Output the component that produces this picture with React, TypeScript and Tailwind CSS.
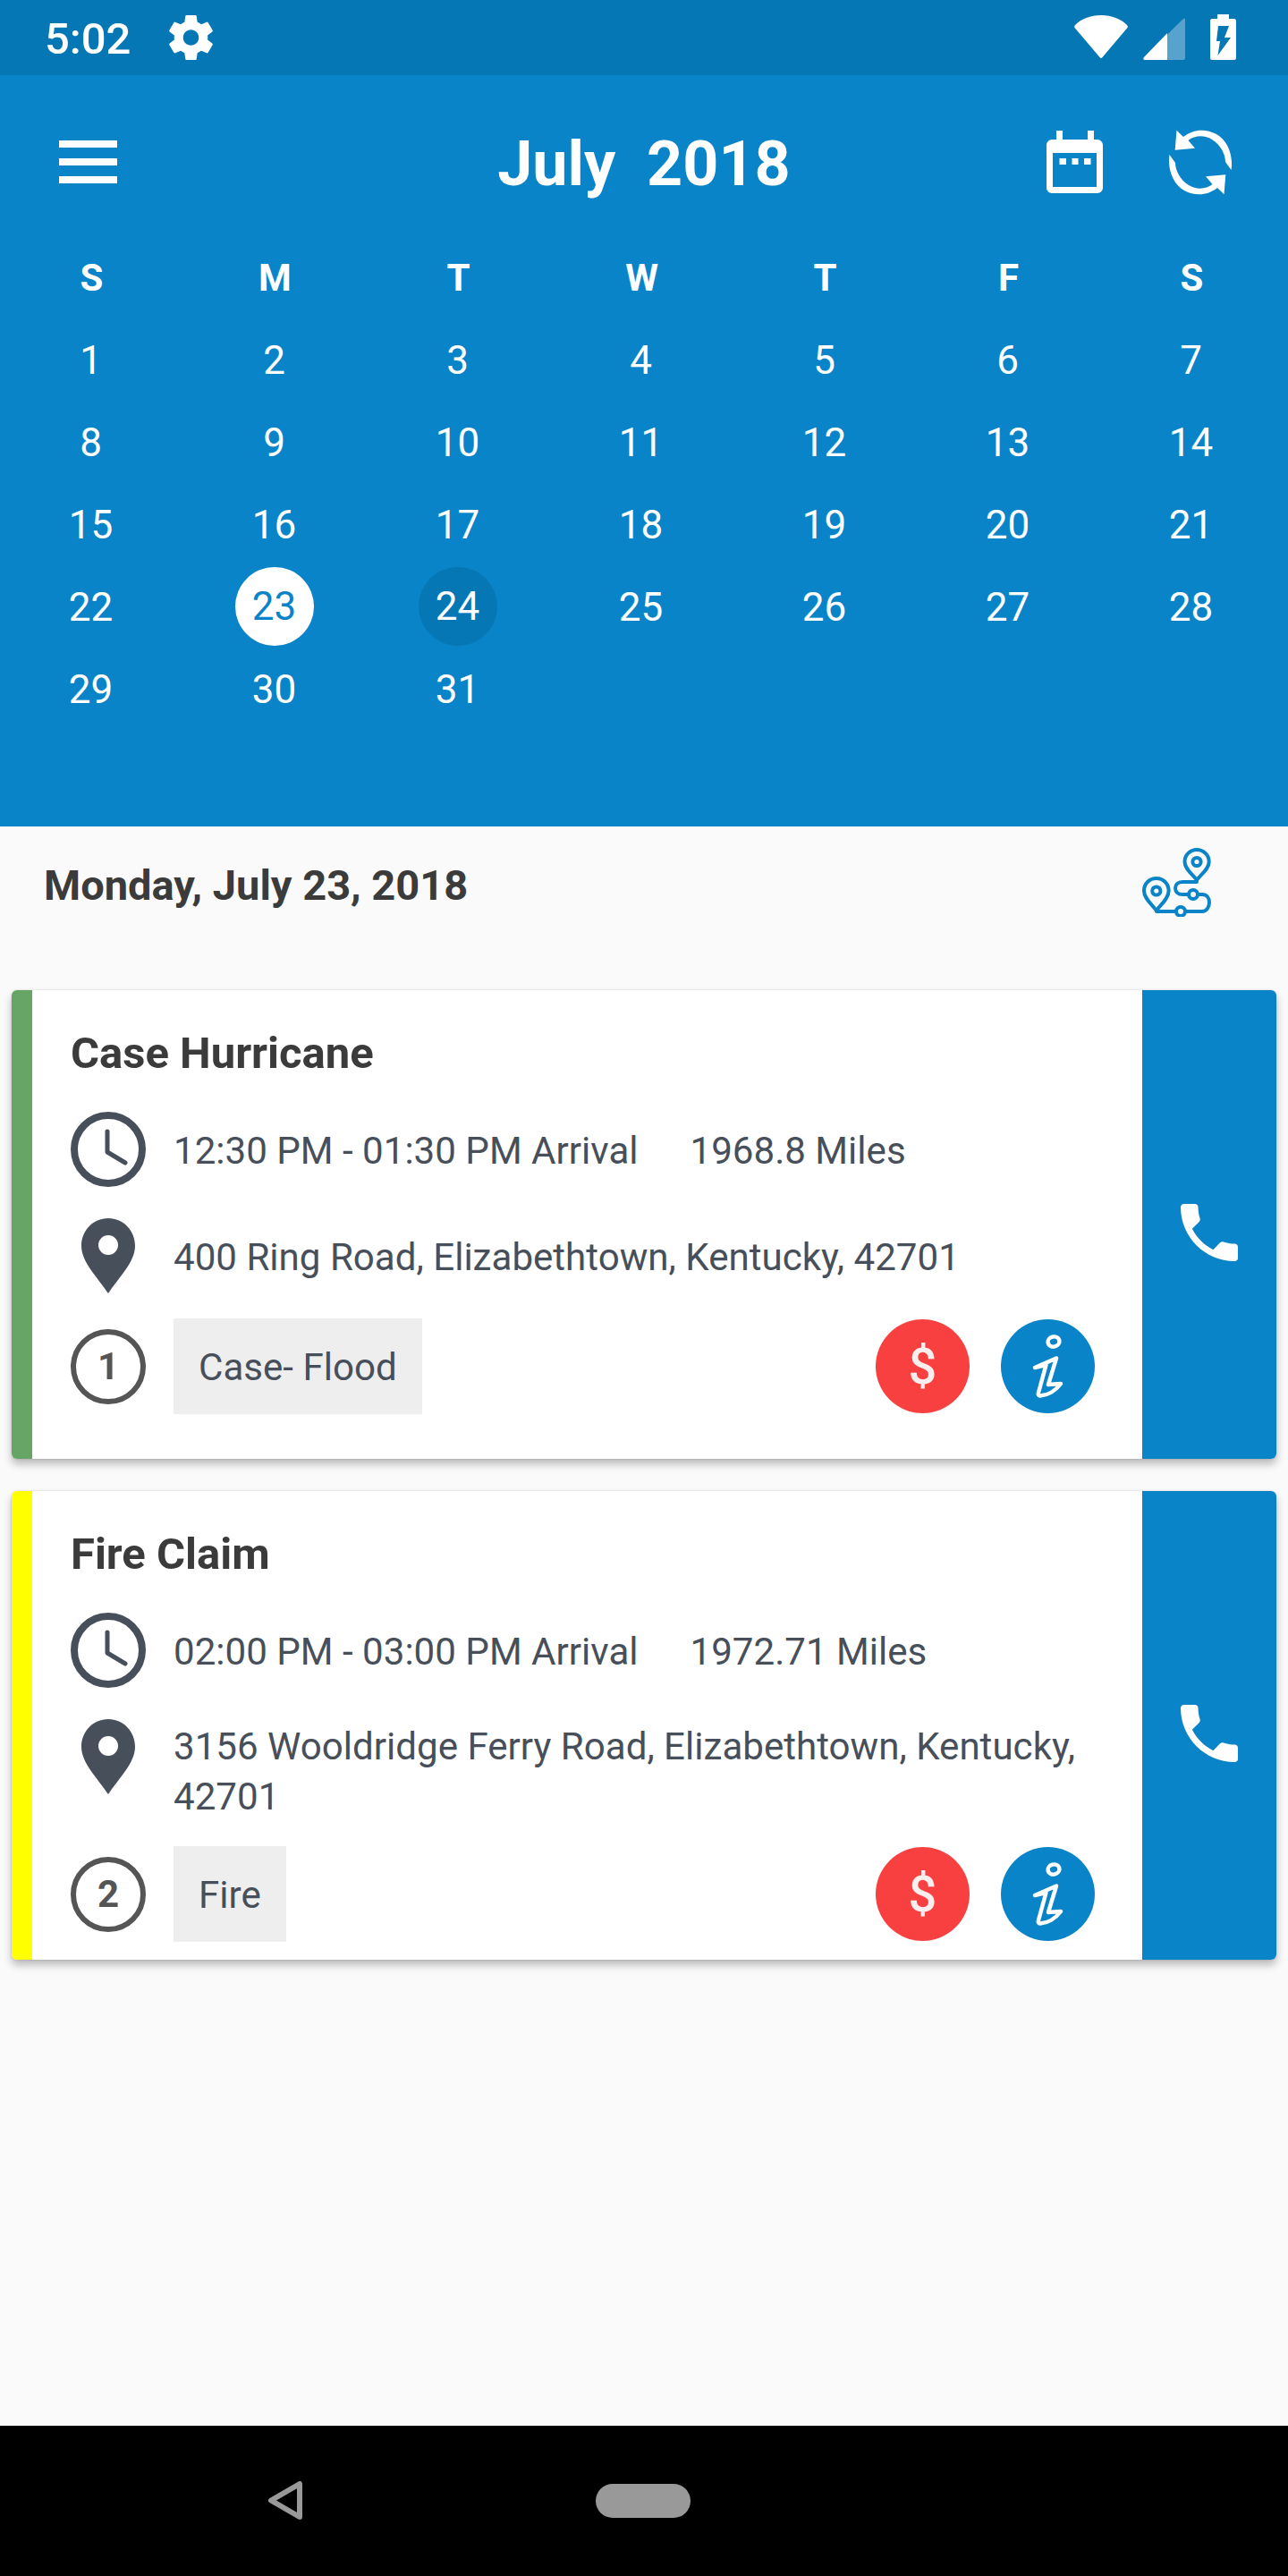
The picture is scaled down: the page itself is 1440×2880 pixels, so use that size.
const weekDays = ['S', 'M', 'T', 'W', 'T', 'F', 'S'];
const days = Array.from({ length: 31 }, (_, i) => i + 1);

function StatusBar() {
  return (
    <div className="h-[84px] shrink-0 bg-[#0677b5] flex items-start text-white">
      <span className="ml-[50px] mt-[15px] text-[49px] leading-[58px] font-medium">5:02</span>
      <svg className="ml-[43px] mt-[17px]" width="49" height="50" viewBox="2.3 2 19.4 20" fill="white">
        <path d="M19.43 12.98c.04-.32.07-.64.07-.98s-.03-.66-.07-.98l2.11-1.65c.19-.15.24-.42.12-.64l-2-3.46c-.12-.22-.39-.3-.61-.22l-2.49 1c-.52-.4-1.08-.73-1.69-.98l-.38-2.65C14.46 2.18 14.25 2 14 2h-4c-.25 0-.46.18-.49.42l-.38 2.65c-.61.25-1.17.59-1.69.98l-2.49-1c-.23-.09-.49 0-.61.22l-2 3.46c-.13.22-.07.49.12.64l2.11 1.65c-.04.32-.07.65-.07.98s.03.66.07.98l-2.11 1.65c-.19.15-.24.42-.12.64l2 3.46c.12.22.39.3.61.22l2.49-1c.52.4 1.08.73 1.69.98l.38 2.65c.03.24.24.42.49.42h4c.25 0 .46-.18.49-.42l.38-2.65c.61-.25 1.17-.59 1.69-.98l2.49 1c.23.09.49 0 .61-.22l2-3.46c.12-.22.07-.49-.12-.64l-2.11-1.65zM12 15.5c-1.93 0-3.5-1.57-3.5-3.5s1.57-3.5 3.5-3.5 3.5 1.57 3.5 3.5-1.57 3.5-3.5 3.5z" />
      </svg>
      <div className="ml-auto mr-[58px] mt-[16px] flex items-start">
        {/* wifi */}
        <svg className="mt-[1px]" width="60" height="48" viewBox="0 0 60 48" fill="white">
          <path d="M1 11C8 4 18 0 30 0s22 4 29 11c1 1 1 2 .5 3L31.5 47c-.8 1.3-2.2 1.3-3 0L.5 14C0 13 0 12 1 11z" />
        </svg>
        {/* signal */}
        <svg className="ml-[17px] mt-[4px]" width="47" height="47" viewBox="0 0 47 47" fill="white">
          <path opacity="0.33" d="M45 1C46 0 47 .5 47 2V45c0 1-1 2-2 2H2C0 47 0 45 1 44z" />
          <path d="M27 17V47H2C0 47 0 45 1 44z" />
        </svg>
        {/* battery */}
        <svg className="ml-[28px]" width="29" height="51" viewBox="0 0 29 51">
          <path fill="white" d="M8 0H21V5H27C28 5 29 6 29 7V49C29 50 28 51 27 51H2C1 51 0 50 0 49V7C0 6 1 5 2 5H8z" />
          <path fill="#0677b5" d="M9 13H21L16 26H23L8.5 46L11 30H7z" />
        </svg>
      </div>
    </div>
  );
}

const refreshArc = 'M8.5 .7L6.7 22.7L29 20.7L21.5 12C29 6 40 6 48 11C58 17 63 28 63 36L69.5 45C72 30 66 12 53 5C40 -2 26 0 16 8z';

function TopRow() {
  return (
    <div className="mt-[56px] h-[82px] grid grid-cols-[1fr_auto_1fr] items-center text-white">
      <div className="ml-[66px] w-[65px] flex flex-col gap-[12px]">
        <div className="h-[8px] bg-white" />
        <div className="h-[8px] bg-white" />
        <div className="h-[8px] bg-white" />
      </div>
      <h1 className="text-[70px] leading-[82px] font-bold whitespace-pre translate-y-[2px]">July  2018</h1>
      <div className="flex justify-end items-center mr-[63px] gap-[74px]">
        <svg width="63" height="70" viewBox="0 0 63 70" fill="white">
          <path d="M11 0H18V10H46V0H53V10H57C60 10 63 13 63 16V64C63 67 60 70 57 70H6C3 70 0 67 0 64V16C0 13 3 10 6 10H11z" />
          <rect x="7" y="25" width="49" height="38" fill="#0a84c8" />
          <rect x="14.5" y="31" width="7.5" height="7" />
          <rect x="28.5" y="31" width="7" height="7" />
          <rect x="42" y="31" width="7.5" height="7" />
        </svg>
        <svg width="70" height="73" viewBox="0 0 70 73" fill="white">
          <path d={refreshArc} />
          <g transform="rotate(180 35 36.5)">
            <path d={refreshArc} />
          </g>
        </svg>
      </div>
    </div>
  );
}

function Calendar() {
  return (
    <div className="h-[840px] shrink-0 bg-[#0a84c8] text-white">
      <TopRow />
      <div className="mt-[42px] grid grid-cols-[repeat(7,205px)] auto-rows-[92px] items-center justify-items-center text-[44px]">
        {weekDays.map((d, i) => (
          <span key={i} className="font-bold text-[42px]">{d}</span>
        ))}
        {days.map((d) => {
          if (d === 23) {
            return (
              <span key={d} className="w-[88px] h-[88px] rounded-full bg-white text-[#0a84c8] flex items-center justify-center -translate-x-[1px]">{d}</span>
            );
          }
          if (d === 24) {
            return (
              <span key={d} className="w-[88px] h-[88px] rounded-full bg-[#0677b5] flex items-center justify-center -translate-x-[1px]">{d}</span>
            );
          }
          return <span key={d} className="pt-[2px] -translate-x-[1px]">{d}</span>;
        })}
      </div>
    </div>
  );
}

function RouteIcon() {
  return (
    <svg width="77" height="77" viewBox="0 0 77 77" fill="none" stroke="#0a84c8" strokeWidth="4" strokeLinecap="round" strokeLinejoin="round">
      <path d="M61 36C57 30 47.5 24 47.5 15.5C47.5 8 53.5 2 61 2S74.7 8 74.7 15.5C74.7 24 65 30 61 36z" />
      <circle cx="61" cy="15.5" r="4.6" />
      <path d="M15.8 70C12 64 2 57 2 48C2 40 8 34 15.8 34S29.6 40 29.6 48C29.6 57 20 64 15.8 70z" />
      <circle cx="15.8" cy="48" r="4.6" />
      <path d="M61 38H45C40 38 37 41 37 45S40 52 45 52H52" />
      <circle cx="57" cy="52" r="5" />
      <path d="M62 52H67C72 52 75 56 75 61S72 71 67 71H48" />
      <circle cx="43" cy="71" r="5" />
      <path d="M38 71H16" />
    </svg>
  );
}

function ClockIcon() {
  return (
    <svg width="84" height="84" viewBox="0 0 84 84" fill="none" stroke="#474f5a" className="shrink-0">
      <circle cx="42" cy="42" r="38" strokeWidth="8" />
      <path d="M41 22V45L61 57" strokeWidth="5" strokeLinecap="round" strokeLinejoin="round" />
    </svg>
  );
}

function PinIcon() {
  return (
    <div className="w-[84px] shrink-0 flex justify-center">
      <svg width="60" height="84" viewBox="0 0 60 84" fill="#474f5a" fillRule="evenodd">
        <path d="M30 0C13 0 0 14 0 31C0 49 18 66 30 84C42 66 60 49 60 31C60 14 47 0 30 0zM30 19A11 11 0 1 1 30 41A11 11 0 1 1 30 19z" />
      </svg>
    </div>
  );
}

function InfoIcon() {
  return (
    <svg width="105" height="105" viewBox="0 0 105 105" fill="none" stroke="white" strokeWidth="4.5" strokeLinejoin="round" strokeLinecap="round" className="block">
      <ellipse cx="59" cy="25" rx="6.5" ry="5.5" transform="rotate(-15 59 25)" />
      <path d="M38 54L62 43.5L53 73L67 72C61 80 52 85 44 85.5C42 85.5 41.5 84 42 82L50.5 51z" />
    </svg>
  );
}

type CaseProps = {
  title: string;
  time: string;
  miles: string;
  address: string;
  num: number;
  tag: string;
  accent: string;
};

function CaseCard({ title, time, miles, address, num, tag, accent }: CaseProps) {
  return (
    <div className="h-[524px] flex rounded-[6px] overflow-hidden bg-white shadow-[0_0_2px_rgba(0,0,0,0.18),0_6px_10px_rgba(0,0,0,0.26)]">
      <div className={`w-[23px] shrink-0 ${accent}`} />
      <div className="flex-1 min-w-0 pl-[43px] pt-[43px] text-[#474f5a] text-[42.1px] leading-[56px]">
        <h2 className="text-[49px] leading-[56px] font-bold text-[#3b3b3b]">{title}</h2>
        <div className="mt-[37px] flex items-center gap-[32px]">
          <ClockIcon />
          <span className="-ml-[1px] translate-y-[2px]">{time}</span>
          <span className="ml-[26px] translate-y-[2px]">{miles}</span>
        </div>
        <div className="mt-[35px] flex items-start gap-[31px] pr-[24px]">
          <PinIcon />
          <p className="min-h-[84px] pt-[2px] flex items-center translate-y-[1px]">{address}</p>
        </div>
        <div className="mt-[28px] flex items-center">
          <div className="w-[84px] h-[84px] shrink-0 rounded-full border-[6px] border-[#555555] text-[#555555] flex items-center justify-center font-bold text-[42px]">{num}</div>
          <div className="ml-[31px] h-[107px] px-[28px] pt-[2px] bg-[#eeeeee] flex items-center">{tag}</div>
          <div className="ml-auto mr-[53px] flex gap-[35px]">
            <div className="w-[105px] h-[105px] rounded-full bg-[#f94040] text-[#f8eeee] flex items-center justify-center text-[56px] font-medium">$</div>
            <div className="w-[105px] h-[105px] rounded-full bg-[#0a84c8]">
              <InfoIcon />
            </div>
          </div>
        </div>
      </div>
      <div className="w-[150px] shrink-0 bg-[#0a84c8] flex justify-center">
        <svg className="mt-[239px]" width="64" height="64" viewBox="3 3 18 18" fill="white">
          <path d="M6.62 10.79c1.44 2.83 3.76 5.14 6.59 6.59l2.2-2.2c.27-.27.67-.36 1.02-.24 1.12.37 2.33.57 3.57.57.55 0 1 .45 1 1V20c0 .55-.45 1-1 1-9.39 0-17-7.61-17-17 0-.55.45-1 1-1h3.5c.55 0 1 .45 1 1 0 1.25.2 2.45.57 3.57.11.35.03.74-.25 1.02l-2.2 2.2z" />
        </svg>
      </div>
    </div>
  );
}

export default function App() {
  return (
    <div className="w-[1440px] h-[2880px] flex flex-col bg-[#fafafa] [font-family:Roboto,sans-serif]">
      <StatusBar />
      <Calendar />
      <main className="flex-1 pt-[24px]">
        <div className="h-[77px] pl-[49px] pr-[86px] flex items-center justify-between">
          <span className="text-[47px] leading-[56px] font-bold text-[#3b3b3b] translate-y-[3px]">Monday, July 23, 2018</span>
          <RouteIcon />
        </div>
        <div className="mt-[82px] mx-[13px] flex flex-col gap-[36px]">
          <CaseCard
            title="Case Hurricane"
            time="12:30 PM - 01:30 PM Arrival"
            miles="1968.8 Miles"
            address="400 Ring Road, Elizabethtown, Kentucky, 42701"
            num={1}
            tag="Case- Flood"
            accent="bg-[#66a566]"
          />
          <CaseCard
            title="Fire Claim"
            time="02:00 PM - 03:00 PM Arrival"
            miles="1972.71 Miles"
            address="3156 Wooldridge Ferry Road, Elizabethtown, Kentucky, 42701"
            num={2}
            tag="Fire"
            accent="bg-[#ffff00]"
          />
        </div>
      </main>
      <div className="h-[168px] shrink-0 bg-black relative">
        <svg className="absolute left-[300px] top-[62px]" width="38" height="43" viewBox="0 0 38 43" fill="none" stroke="#999999" strokeWidth="6" strokeLinejoin="round">
          <path d="M35 3V40L3 21.5z" />
        </svg>
        <div className="absolute left-[666px] top-[65px] w-[106px] h-[38px] rounded-full bg-[#999999]" />
      </div>
    </div>
  );
}
